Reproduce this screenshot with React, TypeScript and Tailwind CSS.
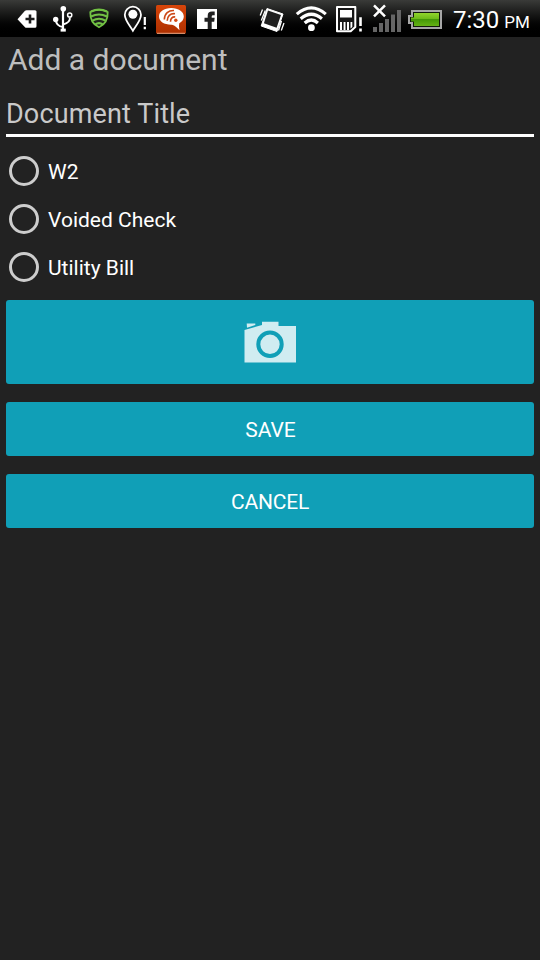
import React from "react";

function LeftIcons() {
  return (
    <div className="flex h-[38px]">
      <svg className="h-[38px] w-[30px]" viewBox="14 0 30 38">
        <path d="M17.5 19.3 25 10.8Q25.6 10.3 26.5 10.3H35q1.5 0 1.5 1.5V26.2q0 1.5-1.5 1.5H26.5Q25.5 27.7 25 27.2Z" fill="#fff" />
        <path d="M25.5 19H34.5M30 14.5V23.5" stroke="#1b1b1b" strokeWidth="2.6" />
      </svg>
      <svg className="h-[38px] w-[38px]" viewBox="44 0 38 38" fill="none" stroke="#fff">
        <path d="M63 8V30" strokeWidth="2.2" />
        <path d="M55.8 19.5C56 24.5 59 26.5 63 27M63 24.5C66.5 23.5 70.5 21.5 69.8 17.5" strokeWidth="1.9" />
        <circle cx="63.3" cy="8.7" r="2.8" fill="#fff" stroke="none" />
        <circle cx="55.7" cy="19.5" r="2.7" fill="#fff" stroke="none" />
        <circle cx="69.7" cy="15" r="2.1" strokeWidth="1.5" />
        <rect x="60.6" y="28.6" width="5.2" height="3" fill="#fff" stroke="none" />
      </svg>
      <svg className="h-[38px] w-[32px]" viewBox="82 0 32 38" fill="none" stroke="#72c244" strokeLinejoin="round">
        <path d="M90.3 12Q99 7.8 107.7 12Q108.2 23 99 27.3Q89.8 23 90.3 12Z" fill="#1d221b" strokeWidth="1.8" />
        <path d="M91 11.500Q99 7.500 107 11.500" strokeWidth="2" />
        <path d="M91 16.500Q99 12.300 107 16.500M92.500 20.700Q99 16.800 105.500 20.700M95 24.600Q99 21.600 103 24.600" strokeWidth="2" />
      </svg>
      <svg className="h-[38px] w-[37px]" viewBox="114 0 37 38">
        <path d="M132.9 30.7C130 25.8 124.8 20.2 124.8 14.700A8.1 8 0 0 1 141 14.7C141 20.2 135.800 25.8 132.9 30.7Z" fill="#151515" stroke="#fff" strokeWidth="1.8" />
        <circle cx="132.900" cy="14.300" r="4.500" fill="#fff" />
        <path d="M144.800 17V25M144.800 26.800V29.200" stroke="#fff" strokeWidth="2.200" />
      </svg>
      <svg className="h-[38px] w-[40px]" viewBox="151 0 40 38">
        <defs><linearGradient id="orange" x2="0" y2="1"><stop stopColor="#d8450a" /><stop offset="1" stopColor="#ad3000" /></linearGradient></defs>
        <rect x="156" y="5" width="30" height="28.700" rx="1.500" fill="url(#orange)" />
        <path d="M157 33.300H185" stroke="#e9a583" />
        <path d="M171.300 8C164 8 159 11.600 159 16.500C159 21.500 164.500 25 172 24.700C175 25.500 176.600 27.500 179.500 30.200Q178.400 26 179.300 23.200C182.500 21.500 183.800 19 183.800 16.500C183.800 11.600 178.500 8 171.300 8Z" fill="#fff" />
        <path d="M164.300 19.500C164.500 13.500 168.500 10.200 174 10.500M167.200 20.800C167.400 16 170 13.300 175 13.700M170.500 21.800C170.500 18.700 172 16.700 175.200 16.900" fill="none" stroke="#cc4818" strokeWidth="1.600" />
        <circle cx="175.800" cy="20.300" r="1.700" fill="#d64b14" />
      </svg>
      <svg className="h-[38px] w-[36px]" viewBox="191 0 36 38">
        <rect x="197" y="9" width="20" height="20" fill="#fff" />
        <path d="M207.700 29V21.700H204.500V17.800H207.700V15.700Q207.700 11.500 212 11.500H214.700V15.200H213Q211.700 15.200 211.700 16.500V17.800H214.700L214.200 21.700H211.700V29Z" fill="#202020" />
      </svg>
    </div>
  );
}

function RightIcons() {
  return (
    <div className="flex h-[38px]">
      <svg className="h-[38px] w-[35px]" viewBox="255 0 35 38">
        <path d="M267 8.500 283 14 277 31.500 261.200 26Z" fill="#fff" stroke="#fff" strokeLinejoin="round" />
        <path d="M268 10.600 281 15.100 276.600 27.700 263.900 23.300Z" fill="#202020" />
        <path d="M262.500 9.500 260.200 15.500M265.300 10.500 261.300 20.500M281.500 21 278.500 30.500M284 23 281.300 30.500" stroke="#fff" strokeWidth="1.300" />
      </svg>
      <svg className="h-[38px] w-[41px]" viewBox="290 0 41 38" fill="none" stroke="#fff" strokeWidth="3.200">
        <path d="M296.800 14.100Q311.300 1.700 325.800 14.100M300.700 18.700Q311.300 9.800 321.900 18.700M304.700 23Q311.300 17 317.900 23" />
        <circle cx="311.400" cy="27.700" r="3.400" fill="#fff" stroke="none" />
      </svg>
      <svg className="h-[38px] w-[37px]" viewBox="331 0 37 38">
        <path d="M337 7H355.300V27L350.700 31.300H337Z" fill="#171717" stroke="#fff" strokeWidth="2" strokeLinejoin="round" />
        <path d="M340 10H352V17.500H340ZM340 22H342V30H340ZM343.600 22H345.500V30H343.600ZM347 22H349V30H347ZM350.500 22H352.300V27L350.500 28.500Z" fill="#fff" />
        <path d="M360.500 17.300V26M360.500 28.500V31.500" stroke="#fff" strokeWidth="2.600" />
      </svg>
      <svg className="h-[38px] w-[37px]" viewBox="368 0 37 38">
        <path d="M373 27H377V32H373ZM379 23H383V32H379ZM385 19H389V32H385ZM391 14.500H395V32H391ZM397 10H401V32H397Z" fill="#656565" />
        <path d="M374 5.300 385 16.300M385 5.300 374 16.300" stroke="#fff" strokeWidth="2.500" />
      </svg>
      <svg className="h-[38px] w-[48px]" viewBox="405 0 48 38">
        <defs><linearGradient id="battery" x2="0" y2="1"><stop stopColor="#91d52d" /><stop offset=".48" stopColor="#6bb818" /><stop offset=".5" stopColor="#459807" /><stop offset="1" stopColor="#65b315" /></linearGradient></defs>
        <path d="M411 10H442V29H411V24H408V15H411Z" fill="#a7a7a7" />
        <path d="M413 12H440V27H413V22H410V17H413Z" fill="#121a0c" />
        <path d="M414 13H439V26H414V21.500H411V17.500H414Z" fill="url(#battery)" />
      </svg>
      <div className="flex w-[87px] items-baseline pt-1 leading-8 text-white">
        <span className="text-[24px]">7:30</span>
        <span className="ml-[5px] text-[17px]">PM</span>
      </div>
    </div>
  );
}

function Choice({ label }: { label: string }) {
  return (
    <label className="flex h-12 items-center pl-[9px]">
      <span className="h-[30px] w-[30px] rounded-full border-[3px] border-[#cdcdcd]" />
      <span className="ml-[9px] pt-0.5 text-[21px] leading-6 text-white">{label}</span>
    </label>
  );
}

export default function App() {
  return (
    <div className="h-[960px] w-[540px] overflow-hidden bg-[#222222] font-['Roboto',sans-serif]">
      <header className="mb-px flex h-[37px] justify-between bg-linear-to-b from-[#3a3b39] to-black to-95% pl-[14px]">
        <LeftIcons />
        <RightIcons />
      </header>
      <h1 className="h-[52px] pl-2 pt-1 text-[30px] leading-9 text-[#bebebe]">Add a document</h1>
      <main className="px-1.5">
        <div className="h-[47px] border-b-[3px] border-white pt-2 text-[27px] leading-8 tracking-[0.13px] text-[#c9c9c9]">Document Title</div>
        <div className="-ml-1.5 mt-2.5 mb-[9px]">
          <Choice label="W2" />
          <Choice label="Voided Check" />
          <Choice label="Utility Bill" />
        </div>
        <button className="flex h-[84px] w-full items-center justify-center rounded-[3px] bg-[#109fb7]" aria-label="Take photo">
          <svg className="h-[64px] w-[80px]" viewBox="0 0 80 64">
            <path d="M14.500 20 32 15V11.700H48.500V16H66V52.500H14.500Z" fill="#d0ecf1" />
            <path d="M16.700 13.500H25.300V15L17 17.700Z" fill="#d0ecf1" />
            <circle cx="40" cy="34.300" r="11.700" fill="none" stroke="#109fb7" strokeWidth="4" />
          </svg>
        </button>
        <button className="mt-[18px] block h-[54px] w-full rounded-[3px] bg-[#109fb7] pt-[3px] pl-px text-[21px] text-white">SAVE</button>
        <button className="mt-[18px] block h-[54px] w-full rounded-[3px] bg-[#109fb7] pt-[3px] text-[21px] tracking-[-0.2px] text-white">CANCEL</button>
      </main>
    </div>
  );
}
